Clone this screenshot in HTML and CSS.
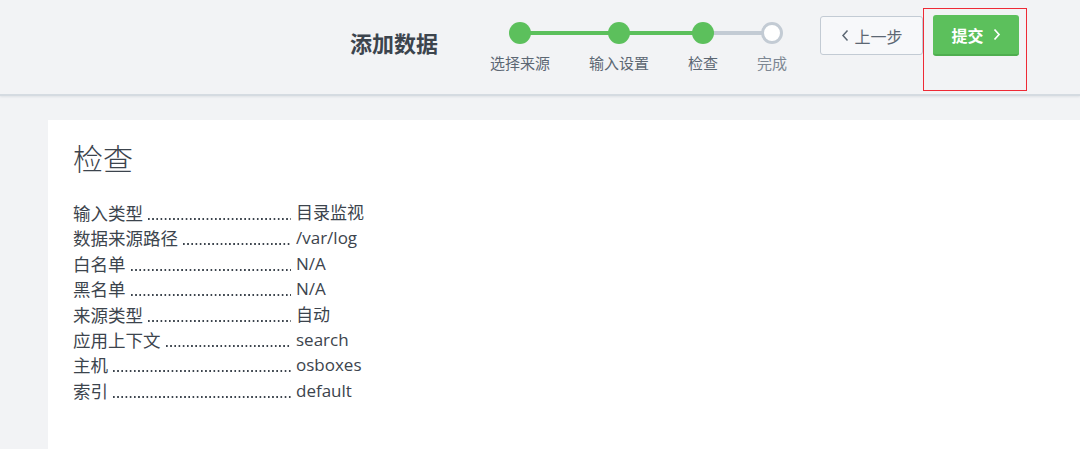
FILE: index.html
```html
<!DOCTYPE html>
<html lang="zh-CN">
<head>
<meta charset="utf-8">
<title>添加数据</title>
<link rel="stylesheet" href="styles.css">
</head>
<body>
<header class="topbar">
  <h1 class="page-title">添加数据</h1>
  <ol class="steps">
    <li class="step done first"><span class="dot"></span><span class="step-label">选择来源</span></li>
    <li class="step done"><span class="dot"></span><span class="step-label">输入设置</span></li>
    <li class="step done current"><span class="dot"></span><span class="step-label">检查</span></li>
    <li class="step todo last"><span class="dot"></span><span class="step-label">完成</span></li>
  </ol>
  <div class="actions">
    <button class="btn btn-back" type="button">
      <svg class="chev" width="8" height="13" viewBox="0 0 8 13"><path d="M6.5 1.5 L2 6.5 L6.5 11.5" fill="none" stroke="currentColor" stroke-width="1.5"/></svg>
      <span>上一步</span>
    </button>
    <div class="highlight">
      <button class="btn btn-submit" type="button">
        <span>提交</span>
        <svg class="chev" width="8" height="13" viewBox="0 0 8 13"><path d="M1.5 1.5 L6 6.5 L1.5 11.5" fill="none" stroke="currentColor" stroke-width="1.7"/></svg>
      </button>
    </div>
  </div>
</header>
<main class="panel">
  <h2 class="section-title">检查</h2>
  <dl class="review">
    <div class="row"><dt><span class="k">输入类型</span><span class="leader"></span></dt><dd>目录监视</dd></div>
    <div class="row"><dt><span class="k">数据来源路径</span><span class="leader"></span></dt><dd>/var/log</dd></div>
    <div class="row"><dt><span class="k">白名单</span><span class="leader"></span></dt><dd>N/A</dd></div>
    <div class="row"><dt><span class="k">黑名单</span><span class="leader"></span></dt><dd>N/A</dd></div>
    <div class="row"><dt><span class="k">来源类型</span><span class="leader"></span></dt><dd>自动</dd></div>
    <div class="row"><dt><span class="k">应用上下文</span><span class="leader"></span></dt><dd>search</dd></div>
    <div class="row"><dt><span class="k">主机</span><span class="leader"></span></dt><dd>osboxes</dd></div>
    <div class="row"><dt><span class="k">索引</span><span class="leader"></span></dt><dd>default</dd></div>
  </dl>
</main>
</body>
</html>
```
FILE: styles.css
```css
* { box-sizing: border-box; }
html, body { margin: 0; padding: 0; }
body {
  background: #f2f3f5;
  font-family: "Open Sans", "Noto Sans CJK SC", sans-serif;
  color: #3c444d;
  height: 449px;
  overflow: hidden;
}
.topbar {
  height: 96px;
  background: #f2f3f5;
  display: flex;
  align-items: flex-start;
  padding-left: 350px;
  border-bottom: 2px solid #d5dbe1;
  box-shadow: 0 1px 2px rgba(60, 80, 100, 0.10);
  position: relative;
  z-index: 1;
}
.page-title {
  margin: 28px 0 0 0;
  font-size: 22px;
  line-height: 28px;
  font-weight: 700;
  font-family: "Noto Sans CJK SC", sans-serif;
  color: #3c444d;
  width: 90px;
}
.steps {
  list-style: none;
  margin: 22px 0 0 50px;
  padding: 0;
  display: flex;
  gap: 39px;
}
.step {
  position: relative;
  display: flex;
  flex-direction: column;
  align-items: center;
}
.step::before, .step::after {
  content: "";
  position: absolute;
  top: 9px;
  height: 4px;
  background: #5cc05c;
}
.step::before { left: -20px; right: 50%; }
.step::after { left: 50%; right: -20px; }
.step.first::before { display: none; }
.step.last::after { display: none; }
.step.current::after, .step.todo::before { background: #c3cbd4; }
.dot {
  position: relative;
  z-index: 1;
  width: 22px;
  height: 22px;
  border-radius: 50%;
  background: #5cc05c;
}
.todo .dot {
  background: #fff;
  border: 3px solid #c3cbd4;
}
.step-label {
  margin-top: 9px;
  font-size: 15px;
  line-height: 20px;
  font-family: "Noto Sans CJK SC", sans-serif;
  color: #5c6773;
  white-space: nowrap;
}
.todo .step-label { color: #7d8793; }
.actions {
  display: flex;
  align-items: flex-start;
  margin-left: 33px;
  gap: 10px;
}
.btn {
  display: flex;
  align-items: center;
  justify-content: center;
  font-family: "Noto Sans CJK SC", sans-serif;
  font-size: 16px;
  border-radius: 3px;
  padding: 0;
  cursor: pointer;
}
.btn-back {
  margin-top: 16px;
  width: 103px;
  height: 39px;
  background: #f7f8fa;
  border: 1px solid #c3cbd4;
  color: #5c6773;
  gap: 6px;
}
.highlight {
  position: relative;
  margin-top: 15px;
}
.highlight::after {
  content: "";
  position: absolute;
  left: -10px;
  top: -7px;
  width: 102px;
  height: 81px;
  border: 1.5px solid #ee2a35;
  pointer-events: none;
}
.btn-submit {
  width: 86px;
  height: 41px;
  background: #5cc05c;
  border: none;
  border-bottom: 2px solid #4fae4f;
  color: #fff;
  font-weight: 700;
  gap: 9px;
}
.panel {
  margin: 24px 0 0 48px;
  background: #fff;
  height: 340px;
  padding: 19px 25px 0 25px;
}
.section-title {
  margin: 0;
  font-size: 30px;
  line-height: 36px;
  font-weight: 300;
  font-family: "Noto Sans CJK SC", sans-serif;
  color: #3c444d;
}
.review {
  margin: 25px 0 0 0;
  padding: 0;
  font-size: 17.5px;
  line-height: 25.4px;
}
.row { display: flex; }
.review dt {
  width: 218px;
  display: flex;
  white-space: nowrap;
}
.k { font-family: "Noto Sans CJK SC", sans-serif; }
.leader {
  flex: 1;
  margin-left: 5px;
  background-image: radial-gradient(circle at 1px 1px, #3c444d 0.8px, transparent 1.1px);
  background-size: 4.2px 3px;
  background-repeat: repeat-x;
  background-position: left 0 top 18px;
}
.review dd {
  margin: 0 0 0 5px;
  font-family: "Open Sans", "Noto Sans CJK SC", sans-serif;
  font-size: 17px;
  color: #3c444d;
}
```
